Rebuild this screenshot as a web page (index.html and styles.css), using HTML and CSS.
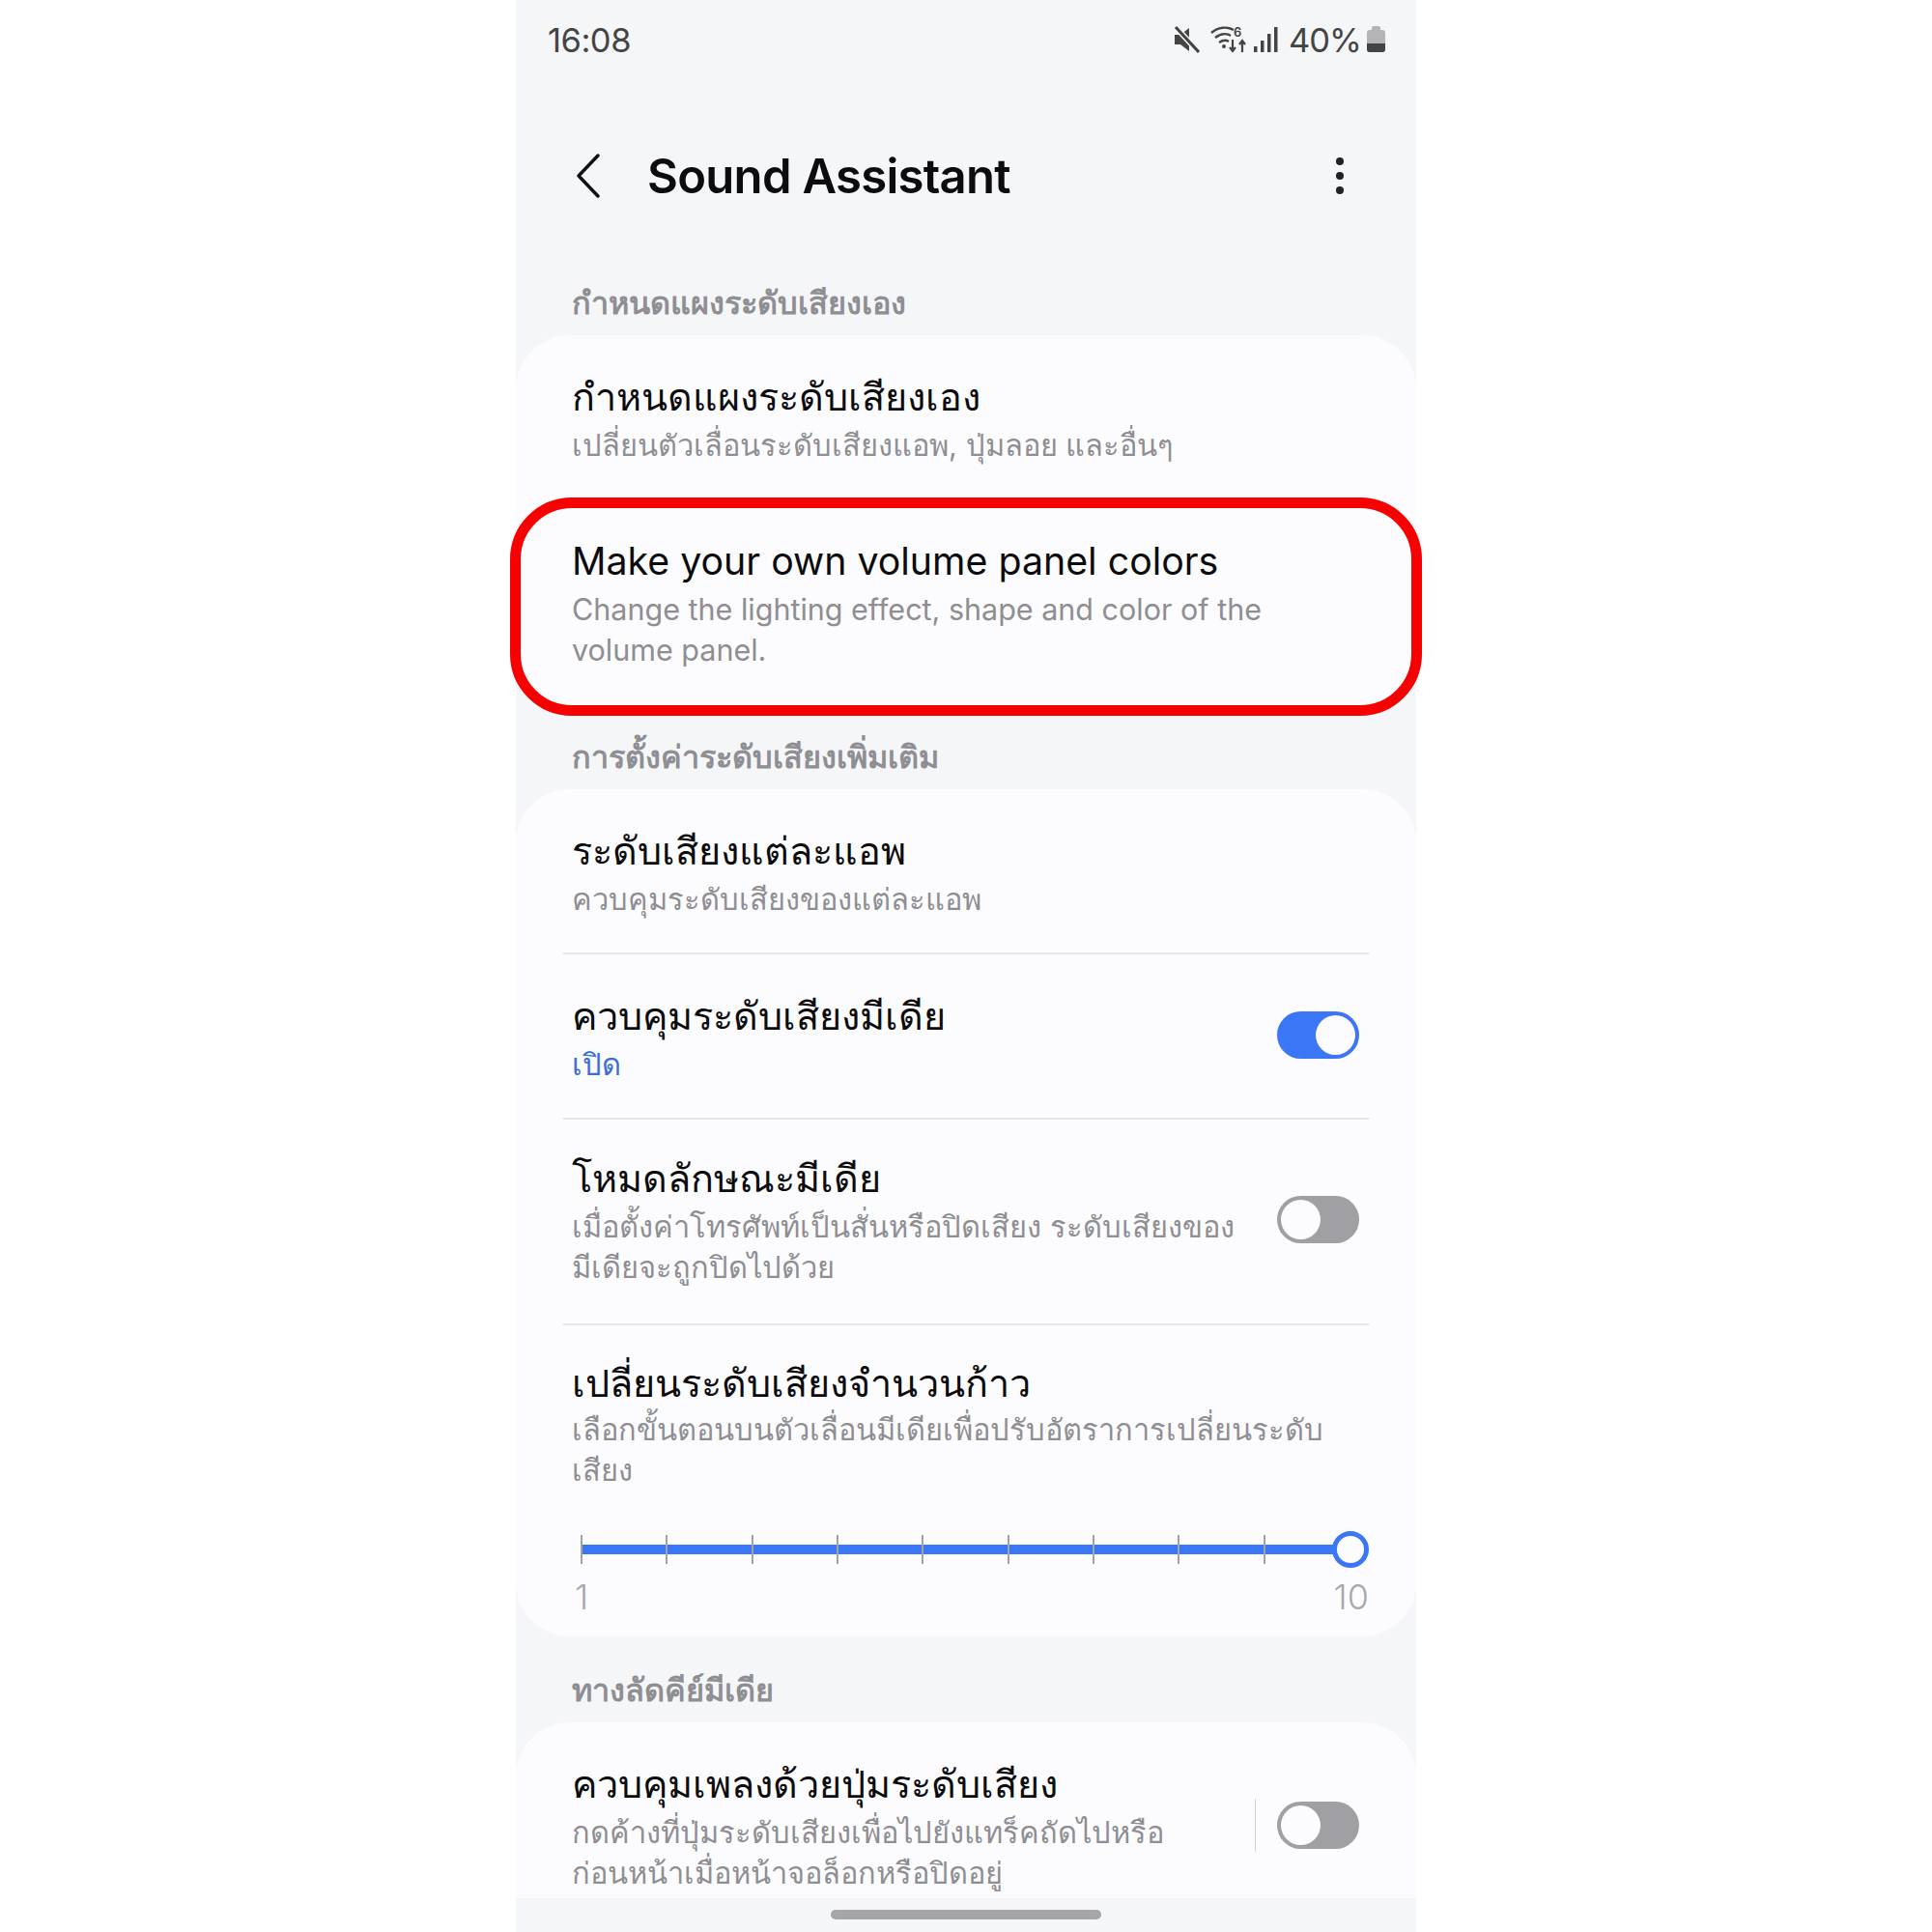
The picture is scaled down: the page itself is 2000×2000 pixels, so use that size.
FILE: index.html
```html
<!DOCTYPE html>
<html lang="th">
<head>
    <meta charset="UTF-8">
    <meta name="viewport" content="width=device-width, initial-scale=1.0">
    <title>Sound Assistant</title>
    <link rel="stylesheet" href="styles.css">
</head>
<body>
    <div class="phone">
        <div class="status-bar">
            <span class="clock">16:08</span>
            <div class="status-icons">
                <svg class="icon-mute" width="28" height="28" viewBox="0 0 28 28">
                    <path d="M2 9h6l9-7v24l-9-7H2z" fill="#444"/>
                    <path d="M3 1l24 26" stroke="#f5f6f8" stroke-width="6"/>
                    <path d="M3 1l24 26" stroke="#444" stroke-width="3"/>
                </svg>
                <svg class="icon-wifi" width="38" height="30" viewBox="0 0 38 30">
                    <g fill="none" stroke="#444" stroke-width="2.4">
                        <path d="M1 8c7-6 16-7 23-3"/>
                        <path d="M5 13c5-4 11-5 16-2"/>
                        <path d="M9 18c3-2 7-3 10-1"/>
                    </g>
                    <circle cx="14" cy="22" r="2" fill="#444"/>
                    <text x="24" y="12" class="wifi-six">6</text>
                    <path d="M23 15v12m-3-4l3 4 3-4M33 28V16m-3 4l3-4 3 4" fill="none" stroke="#444" stroke-width="2.2"/>
                </svg>
                <svg class="icon-signal" width="26" height="28" viewBox="0 0 26 28">
                    <rect x="1" y="21" width="3.5" height="6" fill="#444"/>
                    <rect x="8" y="15" width="3.5" height="12" fill="#444"/>
                    <rect x="15" y="8" width="3.5" height="19" fill="#444"/>
                    <rect x="22" y="1" width="3.5" height="26" fill="#444"/>
                </svg>
                <span class="battery-text">40%</span>
                <div class="battery"><div class="battery-level"></div></div>
            </div>
        </div>

        <header class="app-header">
            <svg class="back" width="26" height="46" viewBox="0 0 26 46">
                <path d="M23 2L3 23l20 21" fill="none" stroke="#111" stroke-width="3.4" stroke-linecap="round" stroke-linejoin="round"/>
            </svg>
            <h1>Sound Assistant</h1>
            <div class="more"><i></i><i></i><i></i></div>
        </header>

        <h2 class="section-label">กำหนดแผงระดับเสียงเอง</h2>
        <section class="card card-first">
            <div class="row">
                <div class="row-text">
                    <div class="row-title">กำหนดแผงระดับเสียงเอง</div>
                    <div class="row-sub">เปลี่ยนตัวเลื่อนระดับเสียงแอพ, ปุ่มลอย และอื่นๆ</div>
                </div>
            </div>
            <div class="row row-marked">
                <div class="row-text">
                    <div class="row-title row-latin">Make your own volume panel colors</div>
                    <div class="row-sub row-latin">Change the lighting effect, shape and color of the<br>volume panel.</div>
                </div>
                <div class="red-mark"></div>
            </div>
        </section>

        <h2 class="section-label">การตั้งค่าระดับเสียงเพิ่มเติม</h2>
        <section class="card card-second">
            <div class="row">
                <div class="row-text">
                    <div class="row-title">ระดับเสียงแต่ละแอพ</div>
                    <div class="row-sub">ควบคุมระดับเสียงของแต่ละแอพ</div>
                </div>
            </div>
            <div class="divider"></div>
            <div class="row">
                <div class="row-text">
                    <div class="row-title">ควบคุมระดับเสียงมีเดีย</div>
                    <div class="row-sub row-on">เปิด</div>
                </div>
                <div class="toggle toggle-on"><div class="knob"></div></div>
            </div>
            <div class="divider"></div>
            <div class="row row-mode">
                <div class="row-text">
                    <div class="row-title">โหมดลักษณะมีเดีย</div>
                    <div class="row-sub">เมื่อตั้งค่าโทรศัพท์เป็นสั่นหรือปิดเสียง ระดับเสียงของ<br>มีเดียจะถูกปิดไปด้วย</div>
                </div>
                <div class="toggle"><div class="knob"></div></div>
            </div>
            <div class="divider"></div>
            <div class="row row-slider">
                <div class="row-text">
                    <div class="row-title">เปลี่ยนระดับเสียงจำนวนก้าว</div>
                    <div class="row-sub">เลือกขั้นตอนบนตัวเลื่อนมีเดียเพื่อปรับอัตราการเปลี่ยนระดับ<br>เสียง</div>
                </div>
                <div class="slider">
                    <div class="slider-track"></div>
                    <div class="ticks">
                        <i></i><i></i><i></i><i></i><i></i><i></i><i></i><i></i><i></i><i></i>
                    </div>
                    <div class="slider-thumb"></div>
                </div>
                <div class="slider-labels"><span>1</span><span>10</span></div>
            </div>
        </section>

        <h2 class="section-label">ทางลัดคีย์มีเดีย</h2>
        <section class="card card-last">
            <div class="row">
                <div class="row-text">
                    <div class="row-title">ควบคุมเพลงด้วยปุ่มระดับเสียง</div>
                    <div class="row-sub">กดค้างที่ปุ่มระดับเสียงเพื่อไปยังแทร็คถัดไปหรือ<br>ก่อนหน้าเมื่อหน้าจอล็อกหรือปิดอยู่</div>
                </div>
                <div class="row-sep"></div>
                <div class="toggle"><div class="knob"></div></div>
            </div>
        </section>

        <div class="nav-bar"><div class="nav-pill"></div></div>
    </div>
</body>
</html>
```

FILE: styles.css
```css
body {
    margin: 0;
    background: #fff;
    font-family: Inter, "Noto Sans", "DejaVu Sans", sans-serif;
    color: #0c0c0e;
}
.phone {
    position: relative;
    width: 932px;
    height: 2000px;
    margin: 0 auto;
    background: #f5f6f8;
    display: flex;
    flex-direction: column;
}

/* Status bar */
.status-bar {
    height: 84px;
    padding: 0 32px 2px 33px;
    display: flex;
    justify-content: space-between;
    align-items: center;
    color: #444;
    box-sizing: border-box;
}
.clock {
    font-size: 34.5px;
    letter-spacing: -0.5px;
}
.status-icons {
    display: flex;
    align-items: center;
}
.icon-wifi {
    margin-left: 11px;
}
.wifi-six {
    font-size: 13px;
    font-weight: 600;
    fill: #444;
}
.icon-signal {
    margin-left: 6px;
}
.battery-text {
    margin-left: 11px;
    font-size: 34.5px;
    letter-spacing: -1px;
}
.battery {
    width: 19px;
    height: 23px;
    margin: 3px 0 0 6px;
    background: #b4b4b6;
    border-radius: 3px;
    position: relative;
    display: flex;
    align-items: flex-end;
}
.battery::before {
    content: "";
    position: absolute;
    top: -4px;
    left: 5px;
    width: 9px;
    height: 4px;
    background: #b4b4b6;
    border-radius: 2px 2px 0 0;
}
.battery-level {
    width: 100%;
    height: 9px;
    background: #444;
    border-radius: 0 0 3px 3px;
}

/* Header */
.app-header {
    height: 196px;
    display: flex;
    align-items: center;
    padding: 0 75px 0 62px;
    box-sizing: border-box;
}
.app-header h1 {
    flex: 1;
    margin: 0 0 0 48px;
    font-size: 49px;
    font-weight: 600;
    letter-spacing: -0.7px;
    color: #0c0c0e;
}
.more i {
    display: block;
    width: 8px;
    height: 8px;
    margin: 7px 0;
    border-radius: 50%;
    background: #222;
}

/* Sections */
.section-label {
    height: 67px;
    margin: 0;
    padding-left: 58px;
    font-size: 32.4px;
    font-weight: 700;
    line-height: 67px;
    color: #8e8e93;
}
.card {
    background: #fcfcfe;
    border-radius: 56px;
}
.card-first {
    height: 391px;
    margin-bottom: 12px;
}
.card-second {
    height: 877px;
    margin-bottom: 22px;
}
.card-last {
    flex: 1;
    border-radius: 56px 56px 0 0;
}
.row {
    position: relative;
    display: flex;
    align-items: center;
    padding: 39px 59px 34px 58px;
}
.row-text {
    flex: 1;
}
.row-title {
    font-size: 39.6px;
    line-height: 50px;
    color: #0c0c0e;
}
.row-title.row-latin {
    font-size: 39.3px;
}
.row-sub {
    margin-top: 4px;
    font-size: 30.8px;
    line-height: 42px;
    color: #8e8e93;
}
.row-sub.row-latin {
    font-size: 30.5px;
}
.row-on {
    color: #3a6fd8;
}
.divider {
    height: 2px;
    margin: 0 49px;
    background: #e6e6e9;
}
.row-marked {
    padding-top: 40px;
    padding-bottom: 33px;
}
.row-mode {
    padding-top: 36px;
    padding-bottom: 37px;
}
.row-slider {
    display: block;
    padding-top: 35px;
    padding-right: 49px;
}
.row-slider .row-sub {
    margin-top: 2px;
}

/* Red annotation drawn over the row */
.red-mark {
    position: absolute;
    top: -1px;
    left: -6px;
    right: -6px;
    bottom: -14px;
    border: 11px solid #f70000;
    border-radius: 64px;
}

/* Toggles */
.toggle {
    width: 85px;
    height: 49px;
    margin-bottom: 3px;
    padding: 4px;
    box-sizing: border-box;
    border-radius: 25px;
    background: #a0a0a4;
    display: flex;
}
.toggle-on {
    margin-bottom: 8px;
    background: #3a76f6;
    justify-content: flex-end;
}
.knob {
    width: 41px;
    height: 41px;
    border-radius: 50%;
    background: #fcfcfe;
}
.row-sep {
    width: 1px;
    height: 55px;
    margin: 0 22px 3px 0;
    background: #d4d4d8;
}

/* Slider */
.slider {
    position: relative;
    margin: 46px 19px 0 9px;
    height: 30px;
}
.slider-track {
    position: absolute;
    top: 10px;
    left: 0;
    right: 0;
    height: 10px;
    background: #3a76f6;
}
.ticks {
    position: relative;
    display: flex;
    justify-content: space-between;
    height: 100%;
}
.ticks i {
    width: 2px;
    background: #a3a3a6;
}
.slider-thumb {
    position: absolute;
    top: -4px;
    right: -19px;
    width: 38px;
    height: 38px;
    border: 5px solid #3a76f6;
    border-radius: 50%;
    background: #fcfcfe;
    box-sizing: border-box;
}
.slider-labels {
    display: flex;
    justify-content: space-between;
    margin-top: 13px;
    padding-left: 3px;
    font-size: 36px;
    line-height: 42px;
    font-weight: 300;
    color: #a8a8ac;
}

/* Bottom navigation */
.nav-bar {
    position: absolute;
    left: 0;
    right: 0;
    bottom: 0;
    height: 35px;
    background: #f5f6f8;
}
.nav-pill {
    width: 280px;
    height: 10px;
    margin: 12px auto 0;
    border-radius: 5px;
    background: #a6a6a9;
}
```
